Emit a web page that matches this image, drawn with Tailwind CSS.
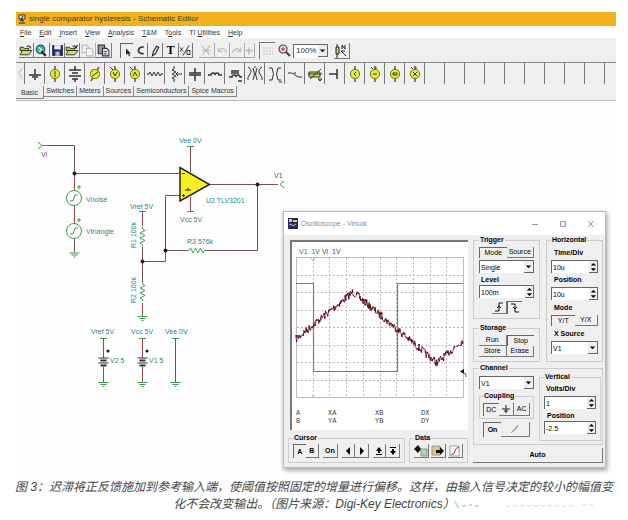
<!DOCTYPE html>
<html lang="zh">
<head>
    <meta charset="UTF-8">
    <meta name="viewport" content="width=device-width, initial-scale=1.0">
    <title>single comparator hysteresis - Schematic Editor</title>
    <script src="https://cdn.jsdelivr.net/npm/@tailwindcss/browser@4"></script>
</head>
<body class="bg-white font-['Liberation_Sans',sans-serif] text-[7px] leading-[10px] text-[#333]">
    <!-- shared symbols -->
    <svg class="hidden">
        <defs>
            <g id="folder"><path d="M1 3h3l1 1h4v2H1z" fill="#b9c43a" stroke="#222" stroke-width=".8"/><path d="M1 10l2-4h9l-3 4z" fill="#d8dc58" stroke="#222" stroke-width=".8"/><path d="M7 2q3-1 4 2" fill="none" stroke="#222"/></g>
            <g id="meter"><path d="M8 1v16" stroke="#333" stroke-width="1.2"/><circle cx="8" cy="9" r="4.6" fill="#e6ee2c" stroke="#6b6f18"/></g>
            <g id="ground" stroke="#3f9a4a" stroke-width="1" fill="none"><path d="M-5 0h10M-3 2h6M-1 4h2"/></g>
            <g id="resistor"><path d="M-10 0h2l1.500-2.500 2.500 5 2.500-5 2.500 5 2.500-5 2.500 5 1.500-2.500h2" fill="none" stroke="#3f9a4a"/></g>
            <g id="battery"><path d="M0-10v6M0 5v15" stroke="#8a4a4e"/><path d="M-5-4h10M-5 1h10" stroke="#333" stroke-width="1.200"/><path d="M-3-1.500h6M-3 3.500h6" stroke="#333" stroke-width="2"/></g>
        </defs>
    </svg>

    <main class="relative mt-3 ml-4 mr-3">
        <header class="flex h-[14px] items-center gap-[3px] bg-[#f2b01f] px-[2px] text-[8px] text-[#4a3a14]">
            <svg class="h-[10px] w-2" viewBox="0 0 8 10"><path d="M1 1h6v4H1z" fill="#ddd" stroke="#333"/><path d="M2 6l4 1M1 9h6M5 2L3 6" stroke="#222"/></svg>
            <h1>single comparator hysteresis - Schematic Editor</h1>
        </header>

        <nav class="flex h-3 items-center gap-2 bg-white pl-1 pt-px">
            <a href="#"><u>F</u>ile</a>
            <a href="#"><u>E</u>dit</a>
            <a href="#"><u>I</u>nsert</a>
            <a href="#"><u>V</u>iew</a>
            <a href="#"><u>A</u>nalysis</a>
            <a href="#"><u>T</u>&amp;M</a>
            <a href="#">T<u>o</u>ols</a>
            <a href="#">TI <u>U</u>tilities</a>
            <a href="#"><u>H</u>elp</a>
        </nav>

        <!-- toolbar -->
        <div class="flex h-6 items-center bg-[#f0eff0] pt-px">
            <div class="flex pl-[3px]">
                <button class="h-[15px] w-[15px] border-r border-b border-[#777]" aria-label="Open"><svg class="h-[13px] w-[14px]" viewBox="0 0 13 12"><use href="#folder"/></svg></button>
                <button class="h-[15px] w-[16px] border-r border-b border-[#777]" aria-label="Web"><svg class="h-[13px] w-[14px]" viewBox="0 0 13 12"><circle cx="6" cy="5" r="4" fill="#3bb3b0" stroke="#1d4b63"/><path d="M4 3l3 2-2 2" stroke="#e8f6e8" fill="none"/><path d="M7 7l4 4" stroke="#222" stroke-width="2"/></svg></button>
                <button class="h-[15px] w-[15px] border-r border-b border-[#777]" aria-label="Save"><svg class="h-[13px] w-[14px]" viewBox="0 0 13 12"><path d="M2 1h10v10H2z" fill="#23285f"/><path d="M4 1h6v4H4z" fill="#e7e9f7"/><path d="M5 7h4v4H5z" fill="#b3b8d6"/></svg></button>
                <button class="h-[15px] w-[15px] border-r border-b border-[#777]" aria-label="Close file"><svg class="h-[13px] w-[14px]" viewBox="0 0 13 12"><use href="#folder"/><path d="M9 4l3-3" stroke="#222"/></svg></button>
                <button class="h-[15px] w-[16px] border-r border-b border-[#aaa]" aria-label="Copy"><svg class="h-[13px] w-[14px]" viewBox="0 0 13 12" fill="#f4f4f4" stroke="#bbb"><path d="M2 1h4l2 2v5H2z"/><path d="M6 4h4l2 2v5H6z"/></svg></button>
                <button class="h-[15px] w-[16px] border-r border-b border-[#777]" aria-label="Paste"><svg class="h-[13px] w-[14px]" viewBox="0 0 13 12" stroke="#333"><path d="M2 1h6v8H2z" fill="#8e99a8"/><path d="M6 4h4l2 2v5H6z" fill="#dfe6f2"/><path d="M7 7h3M7 9h3" stroke="#345" /></svg></button>
            </div>
            <div class="ml-2 flex">
                <button class="h-[15px] w-[13px] border-l border-t border-[#666]" aria-label="Select"><svg class="h-[13px] w-3" viewBox="0 0 12 12"><path d="M5 3v6l2-1 1 3 1-1-1-2h2z" fill="#222"/></svg></button>
                <button class="h-[15px] w-[15px] border-r border-b border-[#777]" aria-label="Arc"><svg class="h-[13px] w-[14px]" viewBox="0 0 13 12"><path d="M10 3Q6 2 5 6q0 3 5 3" fill="none" stroke="#333" stroke-width="1.500"/></svg></button>
                <button class="h-[15px] w-[15px] border-r border-b border-[#777]" aria-label="Wire"><svg class="h-[13px] w-[14px]" viewBox="0 0 13 12"><path d="M5 7l3-5 2 1-3 6-3 2z" fill="#ddd" stroke="#222"/></svg></button>
                <button class="h-[15px] w-[16px] border-r border-b border-[#777] font-['Liberation_Serif',serif] text-[12px] font-bold leading-3 text-black" aria-label="Text">T</button>
                <button class="h-[15px] w-[14px] border-r border-b border-[#777]" aria-label="Formula"><svg class="h-[13px] w-3" viewBox="0 0 12 12" fill="none" stroke="#333"><path d="M1 3l3 4M4 3L1 7M10 1L4 11M8 6h3v4H8z"/></svg></button>
            </div>
            <div class="ml-[6px] flex text-[#bbb]">
                <button class="h-[15px] w-[16px] border-r border-b border-[#aaa]" aria-label="Cut"><svg class="h-[13px] w-[14px]" viewBox="0 0 13 12" fill="none" stroke="currentColor"><path d="M3 2l7 8M10 2L3 10M3 6h8M2 2h2M9 2h2"/></svg></button>
                <button class="h-[15px] w-[15px] border-r border-b border-[#aaa]" aria-label="Undo"><svg class="h-[13px] w-[14px]" viewBox="0 0 13 12" fill="none" stroke="currentColor"><path d="M3 3v4h4M3 7q4-6 8 1"/></svg></button>
                <button class="h-[15px] w-[15px] border-r border-b border-[#aaa]" aria-label="Redo"><svg class="h-[13px] w-[14px]" viewBox="0 0 13 12" fill="none" stroke="currentColor"><path d="M10 3v4H6M10 7Q6 1 2 8"/></svg></button>
                <button class="h-[15px] w-[10px] border-b border-r border-[#aaa]" aria-label="Add"><svg class="h-[13px] w-2" viewBox="0 0 8 12" stroke="currentColor"><path d="M4 3v7M1 6h7" stroke-width="1.500"/></svg></button>
            </div>
            <button class="ml-1 h-[17px] w-4 border-l border-t border-[#777]" aria-label="Grid"><svg class="h-[15px] w-[14px]" viewBox="0 0 14 15"><path d="M3 4h10M3 7h10M3 10h10" stroke="#bbb" stroke-dasharray="2 1"/></svg></button>
            <button class="ml-px h-[15px] w-[17px]" aria-label="Zoom"><svg class="h-[15px] w-4" viewBox="0 0 16 15"><circle cx="7" cy="6" r="4" fill="#e6dde0" stroke="#5b3a40" stroke-width="1.200"/><path d="M5 6h4M7 4v4" stroke="#a33"/><path d="M10 9l4 4" stroke="#6b2c32" stroke-width="2"/></svg></button>
            <div class="relative flex w-[35px]">
                <select class="h-[14px] w-full appearance-none border-l border-t border-[#666] bg-white pl-[2px] text-[8px] leading-[12px]" aria-label="Zoom level"><option>100%</option></select>
                <svg class="pointer-events-none absolute right-0 top-px h-[12px] w-[10px] border-r border-b border-[#666] bg-[#eee]" viewBox="0 0 10 12"><path d="M2 5h6L5 8z" fill="#111"/></svg>
            </div>
            <button class="ml-[6px] h-4 w-4 border-b border-r border-[#777]" aria-label="Probe"><svg class="h-[15px] w-[14px]" viewBox="0 0 14 15"><path d="M3 1v14" stroke="#222"/><path d="M2 4h3v7H2z" fill="#cfd255" stroke="#222"/><path d="M8 2v4M8 2l3 4V2M7 8l5 5M7 8h4" stroke="#222" fill="none"/></svg></button>
        </div>

        <!-- component strip -->
        <div id="parts" class="flex h-[22px] overflow-hidden border-t border-[#888] bg-[#f0eff0]">
            <svg class="h-[21px] w-2 shrink-0" viewBox="0 0 8 21"><path d="M6 5L3 10l3 6" fill="none" stroke="#bbb"/></svg>
        </div>

        <!-- category tabs -->
        <div class="flex h-[17px] items-start border-b border-[#bbb] bg-[#f0eff0] pt-[2px]">
            <button class="h-[13px] border-r border-b border-[#888] px-[5px] pt-[2px]">Basic</button>
            <button class="h-[11px] border-r border-b border-[#888] px-[2px]">Switches</button>
            <button class="h-[11px] border-r border-b border-[#888] px-[2px]">Meters</button>
            <button class="h-[11px] border-r border-b border-[#888] px-[2px]">Sources</button>
            <button class="h-[11px] border-r border-b border-[#888] px-[2px]">Semiconductors</button>
            <button class="h-[11px] border-r border-b border-[#888] px-[2px]">Spice Macros</button>
        </div>

        <!-- schematic sheet -->
        <svg class="block h-[374px] w-full" viewBox="16 101 600 374" preserveAspectRatio="xMinYMin slice" font-size="7" fill="#2f8480">
            <defs>
                <pattern id="dots" width="8" height="8" patternUnits="userSpaceOnUse"><rect x="2" y="5" width="1" height="1" fill="#ecdfe5"/></pattern>
            </defs>
            <rect x="16" y="101" width="600" height="374" fill="#fefefe"/>
            <rect x="16" y="101" width="600" height="374" fill="url(#dots)"/>
            <g fill="none" stroke="#735058">
                <path d="M45 145.500H74.500V190M74.500 206V224M74.500 239V252M74 173.500H180M210 184.500H278M257.500 184V250.500H205M189 250.500H165.500M180 195.500H165.500V261.500H142M142.500 211V226M142.500 247V282M142.500 303V316M190.500 147V172M190.500 197V211M175.500 338V382M103.500 338V354M142.500 338V354"/>
            </g>
            <path d="M74.500 181v8M74.500 209v13M142.500 215v8M142.500 305v8M190.500 149v4M190.500 200v8M103.500 341v8M142.500 341v8M45 145.500h4M274 184.500h4" stroke="#b04a50" stroke-width="1.200" stroke-dasharray="3 2"/>
            <g fill="none" stroke="#3f9a4a">
                <path d="M38 142l4 3.500-4 3.500M42 145.500h3M284 181l-4 3.500 4 3.500M139 211.500h7M187 146.500h7M187 211.500h7M100 338.500h7M139 338.500h7M172 338.500h7"/>
                <circle cx="74" cy="198" r="7.500" fill="#fff"/>
                <circle cx="74" cy="231" r="7.500" fill="#fff"/>
                <path d="M70 201h3l2-6h3M70 234h3l2-6h3M77 187h4M79 185v4M77 220h4M79 218v4"/>
            </g>
            <g fill="#2b1a20">
                <circle cx="74.500" cy="173.500" r="2"/><circle cx="257.500" cy="184.500" r="2"/><circle cx="165.500" cy="250.500" r="2"/><circle cx="142.500" cy="261.500" r="2"/>
                <circle cx="108" cy="351" r="1.500"/><circle cx="147" cy="351" r="1.500"/>
            </g>
            <path d="M180 167.500V201L209.500 184.500z" fill="#fbee22" stroke="#222" stroke-width="1.500"/>
            <path d="M182 173.500h3M182 195.500h3M183.500 194v3M185 190h6M188 188v3" stroke="#333"/>
            <use href="#resistor" x="197" y="250.500"/>
            <use href="#resistor" transform="translate(142.500 237) rotate(90)"/>
            <use href="#resistor" transform="translate(142.500 292) rotate(90)"/>
            <use href="#battery" x="103.500" y="362"/>
            <use href="#battery" x="142.500" y="362"/>
            <use href="#ground" x="74.500" y="253"/>
            <use href="#ground" x="142.500" y="316.500"/>
            <use href="#ground" x="103.500" y="382.500"/>
            <use href="#ground" x="142.500" y="382.500"/>
            <use href="#ground" x="175.500" y="382.500"/>
            <text x="179" y="143">Vee 0V</text>
            <text x="180" y="222">Vcc 5V</text>
            <text x="206" y="203">U2 TLV3201</text>
            <text x="187" y="244">R3 576k</text>
            <text x="130" y="209">Vref 5V</text>
            <text x="86" y="202">Vnoise</text>
            <text x="86" y="234">Vtriangle</text>
            <text transform="translate(136 248) rotate(-90)">R1 100k</text>
            <text transform="translate(136 303) rotate(-90)">R2 100k</text>
            <text x="91" y="334">Vref 5V</text>
            <text x="131" y="334">Vcc 5V</text>
            <text x="165" y="334">Vee 0V</text>
            <text x="110" y="363">V2 5</text>
            <text x="149" y="363">V1 5</text>
            <g fill="#8a3550"><text x="41" y="157">Vi</text><text x="274" y="178">V1</text></g>
        </svg>

        <!-- oscilloscope window -->
        <section class="absolute left-[267px] top-[199px] w-[323px] border border-[#bbb] bg-[#f0eff0] pb-1 shadow-[1px_2px_5px_#0006]">
            <header class="flex h-[23px] items-center bg-white pl-1 text-[#8c8c8c]">
                <svg class="mr-[3px] h-[11px] w-[10px]" viewBox="0 0 10 11"><path d="M0 0h10v11H0z" fill="#28285c"/><path d="M1 1h3v3H1zM5 2h4v2H5z" fill="#d5d83e"/><path d="M1 7l2-1 2 2 3-2" stroke="#b8b8f0" fill="none"/></svg>
                <h2 class="flex-1">Oscilloscope - Virtual</h2>
                <button class="w-7" aria-label="Minimize"><svg class="mx-auto h-2 w-2" viewBox="0 0 8 8"><path d="M1 4.500h6" stroke="#999"/></svg></button>
                <button class="w-7" aria-label="Maximize"><svg class="mx-auto h-2 w-2" viewBox="0 0 8 8"><path d="M1.500 1.500h5v5h-5z" fill="none" stroke="#999"/></svg></button>
                <button class="w-7" aria-label="Close"><svg class="mx-auto h-2 w-2" viewBox="0 0 8 8"><path d="M1 1l6 6M7 1L1 7" stroke="#999"/></svg></button>
            </header>
            <div class="flex gap-[5px] pl-1 pr-[2px] text-black">
                <div class="flex min-w-0 flex-1 flex-col justify-between pt-[5px]">
                    <svg class="ml-[2px] block h-[190px] w-[178px] border-l-2 border-t-2 border-[#777] bg-white" viewBox="292 242 176 188" font-family="Liberation Mono, monospace" font-size="7">
                        <path id="grat" d="" fill="none" stroke="#c3b8be" stroke-dasharray="2 2"/>
                        <path d="M296.500 257.500h167v140h-167zM311 258l2 3 2-3M311 398l2-3 2 3" fill="none" stroke="#bbb"/>
                        <path d="M296 283.500h17.500v88h84v-88H463" fill="none" stroke="#4a9a5c" stroke-width="1.200"/>
                        <path id="noise" d="" fill="none" stroke="#b0465a"/>
                        <path id="noiseCore" d="" fill="none" stroke="#3c1018" stroke-dasharray="3 3"/>
                        <path d="M460 371.500l4-2.500v5z" fill="#111"/><path d="M463 373l3 1v3" stroke="#b03a4a" fill="none"/>
                        <g font-family="Liberation Sans, sans-serif">
                            <text x="299" y="254" fill="#456b4c">V1&#160; 1V</text><text x="322" y="254" fill="#8c1f35">Vi&#160; 1V</text>
                        </g>
                        <g fill="#444">
                            <text x="296" y="415">A</text><text x="328" y="415">XA</text><text x="375" y="415">XB</text><text x="421" y="415">DX</text>
                            <text x="296" y="423">B</text><text x="328" y="423">YA</text><text x="375" y="423">YB</text><text x="421" y="423">DY</text>
                        </g>
                    </svg>
                    <div class="flex gap-1">
                        <fieldset class="min-w-0 flex-1 border border-[#ccc] px-1 pb-1 pt-[2px]">
                            <legend class="px-px font-bold leading-2">Cursor</legend>
                            <div class="flex h-[14px] font-bold">
                                <button class="w-[13px] border-l border-t border-[#666]">A</button>
                                <button class="w-[14px] border-r border-b border-[#777]">B</button>
                                <button class="ml-1 w-[15px] border-r border-b border-[#777]">On</button>
                                <button class="ml-1 w-[14px] border-r border-b border-[#777]" aria-label="Left"><svg class="mx-auto h-2 w-2" viewBox="0 0 8 8"><path d="M6 0v8L2 4z"/></svg></button>
                                <button class="w-[14px] border-r border-b border-[#777]" aria-label="Right"><svg class="mx-auto h-2 w-2" viewBox="0 0 8 8"><path d="M2 0v8l4-4z"/></svg></button>
                                <button class="ml-1 w-[14px] border-r border-b border-[#777]" aria-label="Up"><svg class="mx-auto h-2 w-2" viewBox="0 0 8 8"><path d="M1 4l3-4 3 4zM3 4h2v2H3zM1 7h6v1H1z"/></svg></button>
                                <button class="w-[14px] border-r border-b border-[#777]" aria-label="Down"><svg class="mx-auto h-2 w-2" viewBox="0 0 8 8"><path d="M1 4l3 4 3-4zM3 2h2v2H3zM1 0h6v1H1z"/></svg></button>
                            </div>
                        </fieldset>
                        <fieldset class="border border-[#ccc] px-1 pb-1 pt-[2px]">
                            <legend class="px-px font-bold leading-2">Data</legend>
                            <div class="flex h-[14px] gap-[2px]">
                                <button class="w-[15px] border-r border-b border-[#777]" aria-label="Import"><svg class="h-3 w-[14px]" viewBox="0 0 14 12"><path d="M7 4h6v7H7z" fill="#b9d3b4" stroke="#798"/><path d="M0 4l4-4 3 4-3 4z" fill="#111"/></svg></button>
                                <button class="w-[15px] border-r border-b border-[#777]" aria-label="Export"><svg class="h-3 w-[14px]" viewBox="0 0 14 12"><path d="M1 1h8v9H1z" fill="#d6c98a" stroke="#998"/><path d="M5 5h4V2l4 4-4 4V8H5z" fill="#111"/></svg></button>
                                <button class="w-[15px] border-r border-b border-[#777]" aria-label="Curve"><svg class="h-3 w-[14px]" viewBox="0 0 14 12"><path d="M2 1h9v10H2z" fill="#fff" stroke="#99a"/><path d="M3 10q4-1 4-4t4-4" fill="none" stroke="#b03040"/></svg></button>
                            </div>
                        </fieldset>
                    </div>
                </div>

                <div class="flex w-[130px] shrink-0 flex-col gap-[2px] pt-px">
                    <div class="flex gap-[6px]">
                        <div class="flex w-[67px] flex-col justify-between">
                            <fieldset class="min-w-0 border border-[#ccc] px-[5px] pb-1 pt-[3px]">
                                <legend class="px-px font-bold leading-2">Trigger</legend>
                                <div class="grid h-[11px] grid-cols-2">
                                    <button class="border-l border-t border-[#666]">Mode</button>
                                    <button class="border-r border-b border-[#777]">Source</button>
                                </div>
                                <div class="relative mt-[2px] flex">
                                    <select class="h-[13px] w-full appearance-none border-l border-t border-[#666] bg-white pl-px leading-[11px]" aria-label="Trigger mode"><option>Single</option></select>
                                    <svg class="pointer-events-none absolute right-0 top-px h-[12px] w-[10px] border-r border-b border-[#666] bg-[#eee]" viewBox="0 0 10 12"><path d="M2 5h6L5 8z"/></svg>
                                </div>
                                <label for="level" class="mt-[2px] block pl-[2px] font-bold">Level</label>
                                <div class="relative flex">
                                    <input id="level" class="h-[13px] w-full border-l border-t border-[#666] bg-white pl-px" value="100m">
                                    <svg class="pointer-events-none absolute right-0 top-px h-3 w-[9px] border-r border-b border-[#666] bg-[#eee]" viewBox="0 0 9 12"><path d="M2 5h6L5 2zM2 8h6l-3 3z"/></svg>
                                </div>
                                <div class="mt-[3px] flex h-[13px] justify-center">
                                    <button class="w-[15px] border-r border-b border-[#777]" aria-label="Rising edge"><svg class="mx-auto h-[10px] w-[10px]" viewBox="0 0 10 10" fill="none" stroke="#111"><path d="M1 9h4V1h4M3 6l2-2 2 2"/></svg></button>
                                    <button class="w-[15px] border-l border-t border-[#666]" aria-label="Falling edge"><svg class="mx-auto h-[10px] w-[10px]" viewBox="0 0 10 10" fill="none" stroke="#111"><path d="M1 1h4v8h4M3 4l2 2 2-2"/></svg></button>
                                </div>
                            </fieldset>
                            <fieldset class="min-w-0 border border-[#ccc] px-[5px] pb-1 pt-[3px]">
                                <legend class="px-px font-bold leading-2">Storage</legend>
                                <div class="grid auto-rows-[11px] grid-cols-2">
                                    <button class="border-r border-b border-[#777]">Run</button>
                                    <button class="border-l border-t border-[#666]">Stop</button>
                                    <button class="border-r border-b border-[#777]">Store</button>
                                    <button class="border-r border-b border-[#777]">Erase</button>
                                </div>
                            </fieldset>
                        </div>
                        <fieldset class="min-w-0 flex-1 border border-[#ccc] px-1 pb-[7px] pt-1">
                            <legend class="px-px font-bold leading-2">Horizontal</legend>
                            <label for="timediv" class="block pl-[3px] font-bold">Time/Div</label>
                            <div class="relative mt-[2px] flex">
                                <input id="timediv" class="h-[13px] w-full border-l border-t border-[#666] bg-white pl-px" value="10u">
                                <svg class="pointer-events-none absolute right-0 top-px h-3 w-[9px] border-r border-b border-[#666] bg-[#eee]" viewBox="0 0 9 12"><path d="M2 5h6L5 2zM2 8h6l-3 3z"/></svg>
                            </div>
                            <label for="hpos" class="mt-[2px] block pl-[3px] font-bold">Position</label>
                            <div class="relative mt-[2px] flex">
                                <input id="hpos" class="h-[13px] w-full border-l border-t border-[#666] bg-white pl-px" value="10u">
                                <svg class="pointer-events-none absolute right-0 top-px h-3 w-[9px] border-r border-b border-[#666] bg-[#eee]" viewBox="0 0 9 12"><path d="M2 5h6L5 2zM2 8h6l-3 3z"/></svg>
                            </div>
                            <p class="mt-[3px] pl-[3px] font-bold">Mode</p>
                            <div class="mt-[2px] grid h-[11px] grid-cols-2">
                                <button class="border-l border-t border-[#666]">Y/T</button>
                                <button class="border-r border-b border-[#777]">Y/X</button>
                            </div>
                            <label for="xsrc" class="mt-[3px] block pl-[3px] font-bold">X Source</label>
                            <div class="relative mt-[2px] flex">
                                <select id="xsrc" class="h-[13px] w-full appearance-none border-l border-t border-[#666] bg-white pl-px leading-[11px]"><option>V1</option></select>
                                <svg class="pointer-events-none absolute right-0 top-px h-[12px] w-[10px] border-r border-b border-[#666] bg-[#eee]" viewBox="0 0 10 12"><path d="M2 5h6L5 8z"/></svg>
                            </div>
                        </fieldset>
                    </div>

                    <fieldset class="min-w-0 border border-[#ccc] pb-[3px] pl-[5px] pr-px">
                        <legend class="px-px font-bold leading-2">Channel</legend>
                        <div class="flex gap-[5px]">
                            <div class="w-[55px] pt-1">
                                <div class="relative flex">
                                    <select class="h-[13px] w-full appearance-none border-l border-t border-[#666] bg-white pl-px leading-[11px]" aria-label="Channel"><option>V1</option></select>
                                    <svg class="pointer-events-none absolute right-0 top-px h-[12px] w-[10px] border-r border-b border-[#666] bg-[#eee]" viewBox="0 0 10 12"><path d="M2 5h6L5 8z"/></svg>
                                </div>
                                <fieldset class="mt-[3px] min-w-0 border border-[#ccc] px-[3px] pb-[2px] pt-[3px]">
                                    <legend class="px-px font-bold leading-2">Coupling</legend>
                                    <div class="flex h-[13px]">
                                        <button class="flex-1 border-l border-t border-[#666]">DC</button>
                                        <button class="flex-1 border-r border-b border-[#777]" aria-label="Ground"><svg class="mx-auto h-2 w-2" viewBox="0 0 8 8" stroke="#222"><path d="M4 0v8M0 4h8M2 6h4"/></svg></button>
                                        <button class="flex-1 border-r border-b border-[#777]">AC</button>
                                    </div>
                                </fieldset>
                                <div class="mt-[3px] flex h-[15px] px-1">
                                    <button class="w-[18px] border-l border-t border-[#666] font-bold">On</button>
                                    <button class="flex-1 border-r border-b border-[#777]" aria-label="Color"><svg class="mx-auto h-[10px] w-[10px]" viewBox="0 0 10 10" stroke="#999"><path d="M1 9l7-8M3 8l5-6"/></svg></button>
                                </div>
                            </div>
                            <fieldset class="mt-px min-w-0 flex-1 border border-[#ccc] px-1 pb-[6px] pt-[3px]">
                                <legend class="px-px font-bold leading-2">Vertical</legend>
                                <label for="volts" class="block pl-[2px] font-bold">Volts/Div</label>
                                <div class="relative mt-[2px] flex">
                                    <input id="volts" class="h-[13px] w-full border-l border-t border-[#666] bg-white pl-px" value="1">
                                    <svg class="pointer-events-none absolute right-0 top-px h-3 w-[9px] border-r border-b border-[#666] bg-[#eee]" viewBox="0 0 9 12"><path d="M2 5h6L5 2zM2 8h6l-3 3z"/></svg>
                                </div>
                                <label for="vpos" class="mt-[2px] block pl-[3px] font-bold">Position</label>
                                <div class="relative flex">
                                    <input id="vpos" class="h-[13px] w-full border-l border-t border-[#666] bg-white pl-px" value="-2.5">
                                    <svg class="pointer-events-none absolute right-0 top-px h-3 w-[9px] border-r border-b border-[#666] bg-[#eee]" viewBox="0 0 9 12"><path d="M2 5h6L5 2zM2 8h6l-3 3z"/></svg>
                                </div>
                            </fieldset>
                        </div>
                    </fieldset>
                    <button class="mt-px h-[15px] border-r border-b border-[#777] font-bold">Auto</button>
                </div>
            </div>
        </section>
    </main>

    <p class="relative mt-1 px-3 text-center font-['Liberation_Sans','Noto_Sans_CJK_SC',sans-serif] text-[12px] italic leading-[17px] text-[#444]">
        图 3：迟滞将正反馈施加到参考输入端，使阈值按照固定的增量进行偏移。这样，由输入信号决定的较小的幅值变化不会改变输出。（图片来源：Digi-Key Electronics）
        <svg class="absolute bottom-0 right-6 h-4 w-[150px]" viewBox="0 0 150 16" fill="none" stroke="#bfe3b4"><path d="M0 4l5 7M8 9h4M15 8h3M21 9h3" stroke-width="2"/><path d="M52 9h70M128 8h14" stroke-dasharray="4 3"/></svg>
    </p>

    <script>
        const parts = [
            '<path d="M8 4v6M2 10h12M5 12h6M7 14h2" stroke-width="1.5"/>',
            '<use href="#meter"/><path d="M8 6v6"/>',
            '<path d="M8 1v4M8 14v3M2 5h12M5 8h6M2 11h12M5 14h6" stroke-width="1.5"/>',
            '<use href="#meter" transform="rotate(30 8 9)"/><path d="M5 11l6-4"/>',
            '<use href="#meter"/><path d="M3 2l3 3M6 7l2 4 2-4"/>',
            '<use href="#meter"/><path d="M3 2l3 3M6 11l2-4 2 4"/>',
            '<path d="M0 9h2l1-2 2 4 2-4 2 4 2-4 2 4 1-2h2"/>',
            '<path d="M7 1v3l-2 1 4 2-4 2 4 2-4 2 2 1v3M15 9H9M11 7L9 9l2 2"/>',
            '<path d="M2 8h12M2 10h12M8 3v5M8 10v6" stroke-width="1.5"/>',
            '<path d="M1 10h3q0-2 2-2t2 2q0-2 2-2t2 2h3" stroke-width="1.5"/>',
            '<path d="M2 12h3q0-2 2-2t2 2q0-2 2-2t2 2h2M4 8h8M4 6h8M11 16h4" stroke-width="1.5"/>',
            '<path d="M1 2q5 3 2 7t-2 6M15 2q-5 3-2 7t2 6M6 3q3 6 0 12M10 3q-3 6 0 12M7 2h2"/>',
            '<path d="M2 3h3q3 6 0 12H2M14 3h-3q-3 6 0 12h3M12 17h3"/>',
            '<path d="M1 8h4l6 4h4"/><path d="M8 7v2"/>',
            '<path d="M2 7h11v5H2z" fill="#d7df2a"/><path d="M3 14L14 4M1 9h14M11 14h4l-2 2z"/>',
            '<path d="M2 9h8M10 4v10" stroke-width="1.5"/>',
            '<use href="#meter"/><path d="M9 7L7 9l2 2"/>',
            '<use href="#meter"/><path d="M4 2l2 2M9 2v2M6 9h4"/>',
            '<use href="#meter"/><path d="M6 8h4v2H6z"/>',
            '<use href="#meter"/><path d="M4 2l2 2M9 2v2M6 7l4 4M10 7l-4 4"/>',
        ]
        const strip = document.getElementById('parts')
        for (let i = 0; i < 30; i++) {
            strip.innerHTML += `<button class="h-[21px] w-5 shrink-0 border-l border-[#777]" aria-label="Part ${i + 1}">
                <svg class="mx-auto h-[18px] w-4" viewBox="0 0 16 18" fill="none" stroke="#333">${parts[i] || ''}</svg>
            </button>`
        }

        // scope graticule, 10 x 8 divisions
        let grat = ''
        for (let i = 1; i < 10; i++) grat += `M${Math.round(296 + i * 16.7) + .5} 258V397`
        for (let i = 1; i < 8; i++) grat += `M297 ${Math.round(257 + i * 17.5) + .5}H463`
        document.getElementById('grat').setAttribute('d', grat)

        // noisy triangle wave
        const points = [[296, 339], [353, 292], [437, 363], [463, 340]]
        let seed = 7
        function rand() {
            seed = (seed * 16807) % 2147483647
            return seed / 2147483647 - .5
        }
        let noise = ''
        for (let i = 0; i < 3; i++) {
            const [x1, y1] = points[i]
            const [x2, y2] = points[i + 1]
            for (let x = x1; x < x2; x += .6) {
                const y = y1 + (y2 - y1) * (x - x1) / (x2 - x1) + rand() * 8
                noise += (noise ? 'L' : 'M') + x.toFixed(1) + ' ' + y.toFixed(1)
            }
        }
        document.getElementById('noise').setAttribute('d', noise)
        document.getElementById('noiseCore').setAttribute('d', noise)
    </script>
</body>
</html>
